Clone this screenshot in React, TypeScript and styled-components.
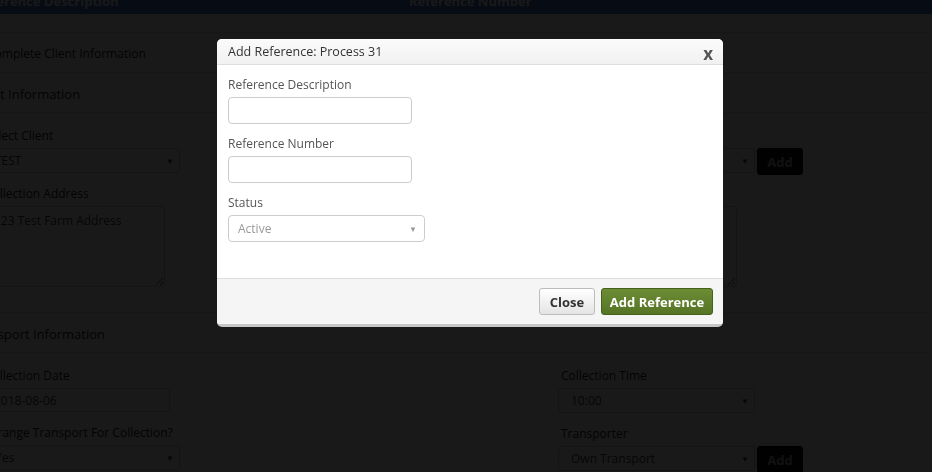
import React from "react";
import styled, { createGlobalStyle } from "styled-components";

const Global = createGlobalStyle`
  html, body { margin: 0; padding: 0; background: #ffffff; overflow: hidden; }
  body { font-family: "Open Sans", "Liberation Sans", sans-serif; color: #222; }
  * { box-sizing: border-box; }
`;

const Page = styled.div`
  margin: -12px 0 0 -50px;
  width: 1100px;
  background: #ffffff;
`;

const TableHead = styled.div`
  display: grid;
  grid-template-columns: 449px 449px 1fr;
  height: 26px;
  align-items: center;
  background: rgb(70, 110, 200);
  color: #ffffff;
  font-size: 13px;
  font-weight: 700;
`;

const HeadCell = styled.div<{ $pad: number }>`
  padding-left: ${(p) => p.$pad}px;
`;

const EmptyRow = styled.div`
  height: 19px;
  border-bottom: 1px solid #dddddd;
`;

const PanelHeading = styled.div<{ $indent: number; $size: number }>`
  height: 40px;
  display: flex;
  align-items: center;
  padding: 2px 0 0 ${(p) => p.$indent}px;
  font-size: ${(p) => p.$size}px;
  color: #222;
  border-bottom: 1px solid #dddddd;
`;

const FormSection = styled.div<{ $top: number; $bottom: number; $border?: boolean }>`
  display: grid;
  grid-template-columns: 576px 1fr;
  padding: ${(p) => p.$top}px 0 ${(p) => p.$bottom}px 32px;
  border-bottom: ${(p) => (p.$border ? "1px solid #dddddd" : "none")};
`;

const Column = styled.div`
  display: flex;
  flex-direction: column;
`;

const FieldGroup = styled.div`
  margin-bottom: 12px;
  &:last-child { margin-bottom: 0; }
`;

const Label = styled.label`
  display: block;
  font-size: 12px;
  line-height: 17px;
  color: #222;
  margin-bottom: 4px;
  padding-left: 3px;
`;

const SelectBox = styled.div<{ $w: number }>`
  width: ${(p) => p.$w}px;
  height: 25px;
  border: 1px solid #cccccc;
  border-radius: 3px;
  background: #ffffff;
  display: flex;
  align-items: center;
  justify-content: space-between;
  padding: 0 5px 0 12px;
  font-size: 12px;
  color: #444;
`;

const Arrow = styled.span`
  font-size: 8px;
  color: #444;
`;

const TextInput = styled.input<{ $w: number }>`
  display: block;
  width: ${(p) => p.$w}px;
  height: 24px;
  border: 1px solid #cccccc;
  border-radius: 3px;
  padding: 0 11px;
  font-family: inherit;
  font-size: 12px;
  color: #444;
  outline: none;
`;

const TextArea = styled.textarea<{ $w: number }>`
  display: block;
  width: ${(p) => p.$w}px;
  height: 81px;
  border: 1px solid #cccccc;
  border-radius: 3px;
  padding: 5px 11px;
  font-family: inherit;
  font-size: 12px;
  color: #444;
  outline: none;
`;

const InputRow = styled.div`
  display: flex;
  align-items: flex-start;
  gap: 2px;
  height: 25px;
`;

const AddButton = styled.button`
  width: 46px;
  height: 27px;
  flex-shrink: 0;
  background: #111111;
  border: 1px solid #000;
  border-radius: 3px;
  color: #aaaaaa;
  font-family: inherit;
  font-size: 13px;
  font-weight: 700;
  padding: 0;
`;

const Overlay = styled.div`
  position: fixed;
  inset: 0;
  background: rgba(0, 0, 0, 0.9);
  display: flex;
  align-items: flex-start;
  padding: 39px 0 0 217px;
`;

const ModalBox = styled.div`
  width: 506px;
  background: #ffffff;
  border-radius: 5px;
  overflow: hidden;
  border-bottom: 3px solid #c6c6c6;
`;

const ModalHeader = styled.div`
  height: 26px;
  display: flex;
  align-items: center;
  justify-content: space-between;
  padding: 0 10px 0 11px;
  background: linear-gradient(#fbfbfb, #f1f1f1);
  border-bottom: 1px solid #dddddd;
`;

const ModalTitle = styled.div`
  font-size: 12.5px;
  color: #333;
`;

const CloseX = styled.span`
  font-size: 17px;
  font-weight: 700;
  color: #555;
  line-height: 1;
  margin-top: 3px;
`;

const ModalBody = styled.div`
  padding: 11px 11px 36px 11px;
`;

const ModalGroup = styled.div`
  margin-bottom: 11px;
  &:last-child { margin-bottom: 0; }
`;

const ModalLabel = styled.label`
  display: block;
  font-size: 12px;
  line-height: 17px;
  color: #555;
  margin-bottom: 4px;
`;

const ModalInput = styled.input`
  display: block;
  width: 184px;
  height: 27px;
  border: 1px solid #cccccc;
  border-radius: 4px;
  padding: 0 8px;
  font-family: inherit;
  font-size: 12px;
  outline: none;
`;

const ModalSelect = styled.div`
  width: 197px;
  height: 27px;
  border: 1px solid #cccccc;
  border-radius: 4px;
  display: flex;
  align-items: center;
  justify-content: space-between;
  padding: 0 7px 0 9px;
  font-size: 12px;
  color: #999;
`;

const ModalArrow = styled.span`
  font-size: 8px;
  color: #999;
`;

const ModalFooter = styled.div`
  display: flex;
  justify-content: flex-end;
  gap: 6px;
  padding: 9px 10px;
  background: #f5f5f5;
  border-top: 1px solid #dddddd;
`;

const FooterButton = styled.button<{ $primary?: boolean; $w: number }>`
  width: ${(p) => p.$w}px;
  height: 27px;
  padding: 0;
  border-radius: 3px;
  font-family: inherit;
  font-size: 13px;
  font-weight: 700;
  color: ${(p) => (p.$primary ? "#ffffff" : "#333333")};
  background: ${(p) =>
    p.$primary
      ? "linear-gradient(#6c8c34, #557526)"
      : "linear-gradient(#ffffff, #e4e4e4)"};
  border: 1px solid ${(p) => (p.$primary ? "#45621c" : "#bdbdbd")};
`;

function Select({ w, value }: { w: number; value: string }) {
  return (
    <SelectBox $w={w}>
      <span>{value}</span>
      <Arrow>▼</Arrow>
    </SelectBox>
  );
}

export default function App() {
  return (
    <>
      <Global />
      <Page>
        <TableHead>
          <HeadCell $pad={25}>Reference Description</HeadCell>
          <HeadCell $pad={10}>Reference Number</HeadCell>
          <HeadCell $pad={10} />
        </TableHead>
        <EmptyRow />
        <PanelHeading $indent={37} $size={12}>Complete Client Information</PanelHeading>
        <PanelHeading $indent={20} $size={13}>Client Information</PanelHeading>
        <FormSection $top={14} $bottom={25} $border>
          <Column>
            <FieldGroup>
              <Label>Select Client</Label>
              <Select w={198} value="TEST" />
            </FieldGroup>
            <FieldGroup>
              <Label>Collection Address</Label>
              <TextArea $w={183} defaultValue="123 Test Farm Address" />
            </FieldGroup>
          </Column>
          <Column>
            <FieldGroup>
              <Label>Select Farm</Label>
              <InputRow>
                <Select w={197} value="Test Farm" />
                <AddButton>Add</AddButton>
              </InputRow>
            </FieldGroup>
            <FieldGroup>
              <Label>Farm Address</Label>
              <TextArea $w={179} defaultValue="" />
            </FieldGroup>
          </Column>
        </FormSection>
        <PanelHeading $indent={20} $size={13}>Transport Information</PanelHeading>
        <FormSection $top={14} $bottom={20}>
          <Column>
            <FieldGroup>
              <Label>Collection Date</Label>
              <TextInput $w={188} defaultValue="2018-08-06" />
            </FieldGroup>
            <FieldGroup>
              <Label>Arrange Transport For Collection?</Label>
              <Select w={198} value="Yes" />
            </FieldGroup>
          </Column>
          <Column>
            <FieldGroup>
              <Label>Collection Time</Label>
              <Select w={197} value="10:00" />
            </FieldGroup>
            <FieldGroup>
              <Label>Transporter</Label>
              <InputRow>
                <Select w={197} value="Own Transport" />
                <AddButton>Add</AddButton>
              </InputRow>
            </FieldGroup>
          </Column>
        </FormSection>
      </Page>
      <Overlay>
        <ModalBox>
          <ModalHeader>
            <ModalTitle>Add Reference: Process 31</ModalTitle>
            <CloseX>x</CloseX>
          </ModalHeader>
          <ModalBody>
            <ModalGroup>
              <ModalLabel>Reference Description</ModalLabel>
              <ModalInput />
            </ModalGroup>
            <ModalGroup>
              <ModalLabel>Reference Number</ModalLabel>
              <ModalInput />
            </ModalGroup>
            <ModalGroup>
              <ModalLabel>Status</ModalLabel>
              <ModalSelect>
                <span>Active</span>
                <ModalArrow>▼</ModalArrow>
              </ModalSelect>
            </ModalGroup>
          </ModalBody>
          <ModalFooter>
            <FooterButton $w={56}>Close</FooterButton>
            <FooterButton $primary $w={112}>Add Reference</FooterButton>
          </ModalFooter>
        </ModalBox>
      </Overlay>
    </>
  );
}
